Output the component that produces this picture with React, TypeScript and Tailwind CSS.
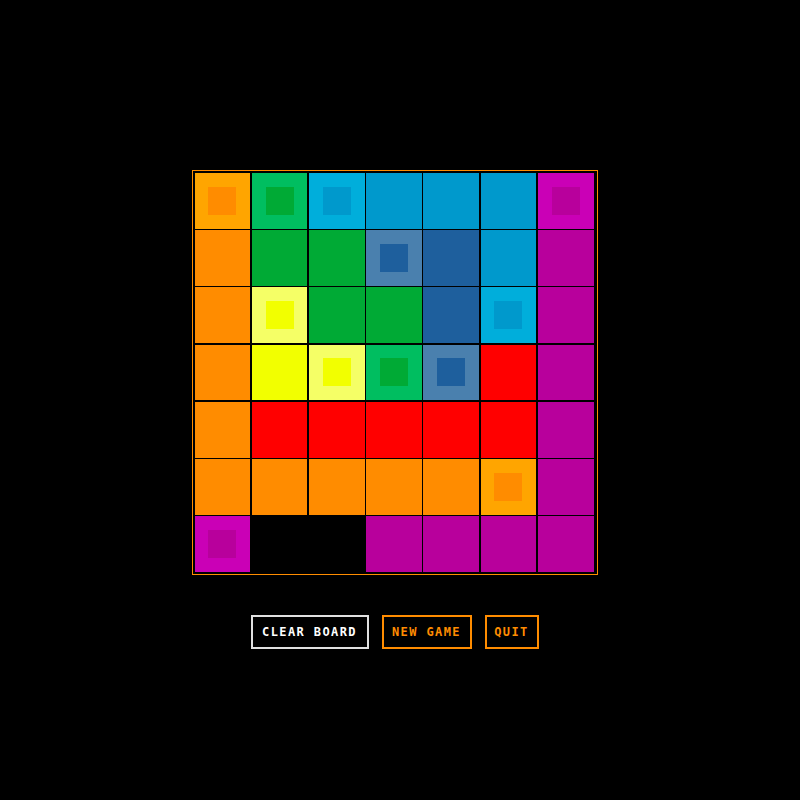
import React from 'react';

type Cell = { c: string; end?: boolean } | null;

// base colour / endpoint ring colour
const colors: Record<string, { base: string; ring: string }> = {
  O: { base: 'bg-[#ff8c00]', ring: 'bg-[#ffa500]' },
  G: { base: 'bg-[#00aa35]', ring: 'bg-[#00be60]' },
  C: { base: 'bg-[#0099cc]', ring: 'bg-[#00aedb]' },
  B: { base: 'bg-[#1e5f9d]', ring: 'bg-[#4a80ae]' },
  Y: { base: 'bg-[#f2ff00]', ring: 'bg-[#f5ff66]' },
  R: { base: 'bg-[#ff0000]', ring: 'bg-[#ff4040]' },
  M: { base: 'bg-[#b8009c]', ring: 'bg-[#ca00b6]' },
};

const layout = [
  'O* G* C* C  C  C  M*',
  'O  G  G  B* B  C  M',
  'O  Y* G  G  B  C* M',
  'O  Y  Y* G* B* R  M',
  'O  R  R  R  R  R  M',
  'O  O  O  O  O  O* M',
  'M* .  .  M  M  M  M',
];

const board: Cell[] = layout.flatMap(row =>
  row.trim().split(/\s+/).map(tok => (tok === '.' ? null : { c: tok[0], end: tok.endsWith('*') }))
);

const BoardCell: React.FC<{ cell: Cell }> = ({ cell }) => {
  if (!cell) return <div className="bg-black" />;
  const col = colors[cell.c];
  if (!cell.end) return <div className={col.base} />;
  return (
    <div className={`${col.ring} flex items-center justify-center`}>
      <div className={`${col.base} w-[28px] h-[28px]`} />
    </div>
  );
};

export default function App() {
  return (
    <div className="min-h-screen w-full bg-black flex flex-col items-center pt-[170px] pr-[11px]" style={{ fontFamily: '"DejaVu Sans Mono", monospace' }}>
      {/* board */}
      <div className="w-[406px] h-[405px] border border-[#ff8c00] bg-black pt-[2px] pl-[2px] pr-[3px] pb-[2px]">
        <div className="grid grid-cols-7 grid-rows-7 gap-[1.5px] w-full h-full bg-black">
          {board.map((cell, i) => (
            <BoardCell key={i} cell={cell} />
          ))}
        </div>
      </div>

      {/* controls */}
      <div className="mt-[40px] flex gap-[13px]">
        <button className="h-[34px] w-[118px] border-2 border-[#e0e0e0] text-white text-[12px] font-bold tracking-[1.4px] uppercase">
          Clear Board
        </button>
        <button className="h-[34px] w-[90px] border-2 border-[#ff8c00] text-[#ff8c00] text-[12px] font-bold tracking-[1.4px] uppercase">
          New Game
        </button>
        <button className="h-[34px] w-[54px] border-2 border-[#ff8c00] text-[#ff8c00] text-[12px] font-bold tracking-[1.4px] uppercase">
          Quit
        </button>
      </div>
    </div>
  );
}
